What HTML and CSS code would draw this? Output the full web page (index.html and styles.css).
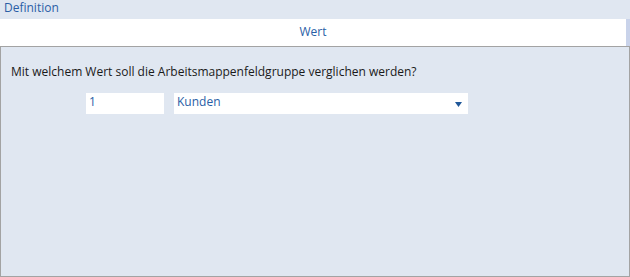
FILE: index.html
```html
<!DOCTYPE html>
<html>
<head>
<meta charset="utf-8">
<link rel="stylesheet" href="styles.css">
</head>
<body>
<div class="page">
  <div class="section-title">Definition</div>
  <div class="tabbar">
    <div class="tab">Wert</div>
    <div class="tab-edge"></div>
  </div>
  <div class="panel">
    <div class="question">Mit welchem Wert soll die Arbeitsmappenfeldgruppe verglichen werden?</div>
    <div class="row">
      <div class="field num">1</div>
      <div class="field combo">
        <span>Kunden</span>
        <svg class="arrow" width="7" height="5" viewBox="0 0 7 5"><path d="M0 0H7L3.5 5Z" fill="#1f5799"/></svg>
      </div>
    </div>
  </div>
</div>
</body>
</html>
```
FILE: styles.css
```css
html, body {
  margin: 0;
  padding: 0;
}
body {
  background: #e0e7f1;
  font-family: "Open Sans", "Noto Sans", "DejaVu Sans", sans-serif;
  font-size: 12px;
  width: 630px;
  height: 277px;
  overflow: hidden;
}
.page {
  display: flex;
  flex-direction: column;
  height: 277px;
}
.section-title {
  height: 19px;
  line-height: 16px;
  padding-left: 4px;
  color: #2a5ea6;
  box-sizing: border-box;
}
.tabbar {
  display: flex;
  height: 27px;
}
.tab {
  flex: 1;
  background: #ffffff;
  color: #2a5ea6;
  text-align: center;
  line-height: 26px;
}
.tab-edge {
  width: 4px;
  background: #c9d3ea;
}
.panel {
  flex: 1;
  border: 1px solid #a3a3a3;
  border-bottom-width: 1px;
  margin-bottom: 0;
  box-sizing: border-box;
  padding: 17px 0 0 10px;
}
.question {
  color: #1a1a1a;
  line-height: 16px;
}
.row {
  display: flex;
  gap: 10px;
  margin-top: 13px;
  padding-left: 75px;
}
.field {
  background: #ffffff;
  height: 21px;
  line-height: 18px;
  color: #2a5ea6;
  box-sizing: border-box;
  padding-left: 3px;
}
.num {
  width: 78px;
}
.combo {
  width: 294px;
  display: flex;
  align-items: center;
  justify-content: space-between;
  padding-right: 6px;
}
.combo span {
  line-height: 18px;
  align-self: flex-start;
}
.arrow {
  display: block;
  margin-top: 2px;
}
```
